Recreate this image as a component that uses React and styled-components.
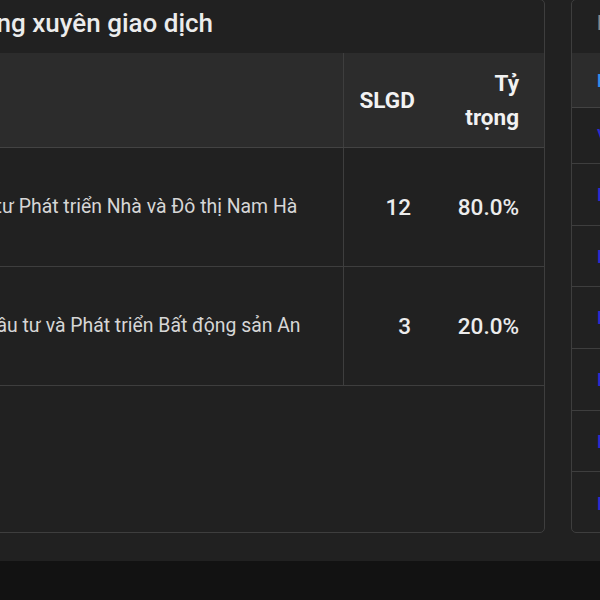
import React from "react";
import styled, { createGlobalStyle } from "styled-components";

const GlobalStyle = createGlobalStyle`
  body {
    margin: 0;
    background: #121212;
    font-family: Roboto, "Noto Sans", Arial, sans-serif;
    overflow: hidden;
  }
`;

// danh sách khách hàng giao dịch thường xuyên
const customers = [
  { name: "Công ty Cổ phần Đầu tư Phát triển Nhà và Đô thị Nam Hà", count: 12, ratio: "80.0%" },
  { name: "Công ty TNHH MTV Đầu tư và Phát triển Bất động sản An", count: 3, ratio: "20.0%" },
];

const recent = ["VHM", "NVL", "KDH", "DXG", "PDR", "NLG", "HDG"];

function App() {
  return (
    <>
      <GlobalStyle />
      <Page>
        <Card width="756px">
          <CardTitle>Khách hàng thường xuyên giao dịch</CardTitle>
          <Table>
            <colgroup>
              <col style={{ width: 553 }} />
              <col style={{ width: 88 }} />
              <col />
            </colgroup>
            <thead>
              <tr>
                <HeadCell divider />
                <HeadCell align="right">SLGD</HeadCell>
                <HeadCell align="right" pad="25px">Tỷ trọng</HeadCell>
              </tr>
            </thead>
            <tbody>
              {customers.map((c) => (
                <Row key={c.name}>
                  <NameCell>{c.name}</NameCell>
                  <NumCell>{c.count}</NumCell>
                  <NumCell last>{c.ratio}</NumCell>
                </Row>
              ))}
            </tbody>
          </Table>
        </Card>
        <Card width="300px">
          <CardTitle muted>Lịch sử giao dịch</CardTitle>
          <SideHead>Mã CK</SideHead>
          {recent.map((code, i) => (
            <SideRow key={code} first={i === 0}>
              {code}
            </SideRow>
          ))}
        </Card>
      </Page>
      <Footer />
    </>
  );
}

export default App;

const Page = styled.div`
  display: flex;
  align-items: flex-start;
  gap: 26px;
  height: 561px;
  margin-left: -211px;
  background: #212121;
  overflow: hidden;
`;

const Card = styled.div`
  flex-shrink: 0;
  width: ${(props) => props.width};
  height: 534px;
  margin-top: -1px;
  box-sizing: border-box;
  border: 1px solid #3e3e3e;
  border-radius: 5px;
  background: #212121;
  overflow: hidden;
`;

const CardTitle = styled.div`
  height: 53px;
  box-sizing: border-box;
  padding: 0 16px 8px ${(props) => (props.muted ? "25px" : "9px")};
  display: flex;
  align-items: center;
  font-size: ${(props) => (props.muted ? "20px" : "26px")};
  font-weight: 500;
  color: ${(props) => (props.muted ? "#8a8a8a" : "#ececec")};
  white-space: nowrap;
`;

const Table = styled.table`
  width: 100%;
  border-collapse: collapse;
  table-layout: fixed;
`;

const HeadCell = styled.th`
  height: 94px;
  box-sizing: border-box;
  padding: 0 ${(props) => props.pad || "20px"} 0 16px;
  background: #2c2c2c;
  border-bottom: 1px solid #434343;
  border-right: ${(props) => (props.divider ? "1px solid #3e3e3e" : "none")};
  text-align: ${(props) => props.align || "left"};
  font-size: 22.5px;
  font-weight: 700;
  line-height: 34px;
  color: #f2f2f2;
`;

const Row = styled.tr`
  height: 119px;
  border-bottom: 1px solid #3e3e3e;
`;

const NameCell = styled.td`
  padding: 0 16px 0 20px;
  border-right: 1px solid #3e3e3e;
  font-size: 19.4px;
  color: #d6d6d6;
  white-space: nowrap;
  overflow: hidden;
`;

const NumCell = styled.td`
  padding: 0 ${(props) => (props.last ? "25px" : "20px")} 0 0;
  text-align: right;
  font-size: 22.5px;
  font-weight: 500;
  color: #ececec;
`;

const SideHead = styled.div`
  height: 55px;
  box-sizing: border-box;
  padding-left: 25px;
  display: flex;
  align-items: center;
  background: #2c2c2c;
  border-bottom: 1px solid #434343;
  font-size: 18px;
  font-weight: 700;
  color: #2f8fe8;
`;

const SideRow = styled.div`
  height: ${(props) => (props.first ? "56px" : "61.7px")};
  box-sizing: border-box;
  padding-left: 25px;
  display: flex;
  align-items: center;
  border-bottom: 1px solid #3e3e3e;
  font-size: 18px;
  font-weight: 500;
  color: #2b2bd0;

  &:last-child {
    border-bottom: none;
  }
`;

const Footer = styled.div`
  height: 40px;
  background: #121212;
`;
